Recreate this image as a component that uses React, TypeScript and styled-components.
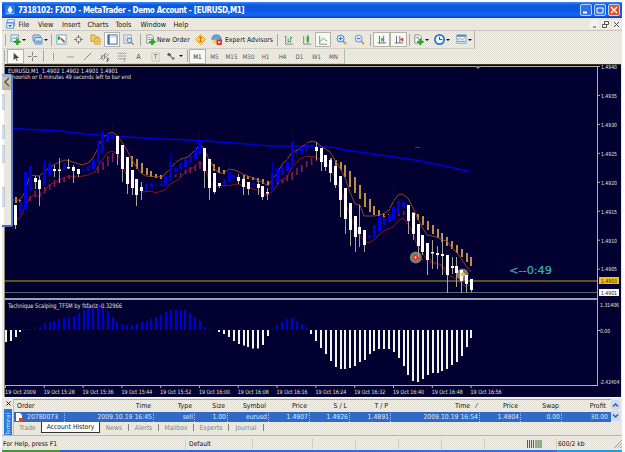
import React from "react";
import styled, { createGlobalStyle } from "styled-components";

const GlobalStyle = createGlobalStyle`
  html, body { margin: 0; padding: 0; background: #fff; overflow: hidden; }
  * { box-sizing: border-box; }
`;

const chrome = "repeating-conic-gradient(#f1f0e6 0 25%, #e2e0d6 0 50%) 0 0 / 2px 2px";

const Window = styled.div`
  width: 620px;
  height: 450px;
  margin: 2px 3px 0 2px;
  display: flex;
  flex-direction: column;
  background: ${chrome};
  font-family: "DejaVu Sans Condensed", "DejaVu Sans", sans-serif;
  font-stretch: condensed;
  font-size: 7px;
  color: #111;
  white-space: nowrap;
  overflow: hidden;
`;
const TitleBar = styled.header`
  flex: none;
  height: 16px;
  display: flex;
  align-items: center;
  padding: 0 2px 0 3px;
  background: linear-gradient(#3b8cf8 0, #0d58dc 3px, #0b5ae4 9px, #1468f4 13px, #0a43b4 16px);
  color: #fff;
`;
const Title = styled.div`
  flex: 1;
  margin-left: 3px;
  font: bold 8px "DejaVu Sans Condensed", "DejaVu Sans", sans-serif;
  font-stretch: condensed;
  letter-spacing: -0.4px;
  word-spacing: 0.2px;
`;
const CaptionButton = styled.div<{ $close?: boolean }>`
  width: 12px;
  height: 12px;
  margin-left: 2px;
  border: 1px solid #bcd2fa;
  border-radius: 2px;
  background: ${(p) => (p.$close ? "#e0512c" : "#2f6fea")};
  display: flex;
`;
const MenuBar = styled.nav`
  flex: none;
  height: 13px;
  display: flex;
  align-items: center;
  padding-left: 2px;
  border-bottom: 1px solid #c9c7ba;
`;
const MenuItem = styled.span<{ $w: number }>`
  width: ${(p) => p.$w}px;
  font-size: 7.2px;
`;
const MdiButtons = styled.div`
  margin-left: auto;
  display: flex;
  gap: 2px;
  padding-right: 1px;
`;
const MdiButton = styled.div`
  width: 9px;
  height: 9px;
  background: #f3f2ea;
  display: flex;
`;
const ToolBar = styled.div<{ $h: number; $w: number }>`
  flex: none;
  height: ${(p) => p.$h}px;
  width: ${(p) => p.$w}px;
  display: flex;
  align-items: center;
  border-right: 1px solid #bbb9ad;
  border-bottom: 1px solid #d2d0c4;
`;
const Tool = styled.div<{ $w: number; $on?: boolean }>`
  width: ${(p) => p.$w}px;
  height: 15px;
  flex: none;
  display: flex;
  align-items: center;
  justify-content: center;
  color: ${(p) => (p.$on ? "#222" : "#555")};
  font-size: 6.2px;
  background: ${(p) => (p.$on ? "#f8f8f4" : "transparent")};
  box-shadow: ${(p) => (p.$on ? "inset 0 0 0 1px #b3b3a8" : "none")};
`;
const ToolText = styled.span<{ $w: number }>`
  width: ${(p) => p.$w}px;
  flex: none;
  font-size: 6.8px;
`;
const Grip = styled.div<{ $w: number }>`
  width: ${(p) => p.$w}px;
  height: 12px;
  flex: none;
  display: flex;
  justify-content: center;
  &::before { content: ""; width: 1px; background: #aaa89c; }
`;
const Caret = styled.div<{ $w: number }>`
  width: ${(p) => p.$w}px;
  flex: none;
  display: flex;
  &::before {
    content: "";
    border: 2px solid transparent;
    border-top-color: #111;
    border-bottom: 0;
  }
`;
const ChartArea = styled.main`
  flex: none;
  position: relative;
  height: 333px;
  padding-left: 2px;
  svg { display: block; }
`;
const SlidePanel = styled.aside`
  position: absolute;
  left: 0;
  top: 10px;
  width: 11px;
  height: 153px;
  background: linear-gradient(90deg, #fff 2px, transparent 2px), ${chrome};
  border-right: 2px solid #5a82d2;
  border-bottom: 2px solid #5a62b8;
  border-radius: 0 3px 2px 0;
`;
const SlideArrow = styled.div`
  width: 9px;
  height: 16px;
  background: linear-gradient(#8aa4d8, #cfcabe 5px, #b8b2a4);
  display: flex;
  align-items: center;
  justify-content: center;
`;
const SlideTab = styled.div<{ $gap: number; $h: number }>`
  width: 3px;
  margin-top: ${(p) => p.$gap}px;
  height: ${(p) => p.$h}px;
  background: #d0dfee;
  border: 1px solid #c0cad2;
  border-left: 0;
`;
const Terminal = styled.section`
  flex: none;
  height: 39px;
  display: flex;
  padding: 1px 2px 0 2px;
  border-top: 1px solid #f9f8f2;
  border-bottom: 1px solid #bab8aa;
`;
const TerminalSide = styled.div`
  width: 8px;
  display: flex;
  flex-direction: column;
  align-items: center;
`;
const SideTitle = styled.div`
  margin-top: 1px;
  width: 8px;
  height: 26px;
  overflow: hidden;
  background: #2877dc;
  color: #d7e8ff;
  font-size: 5.8px;
  line-height: 8px;
  writing-mode: vertical-rl;
  transform: rotate(180deg);
`;
const SideClose = styled.div`
  height: 9px;
  display: flex;
  align-items: center;
`;
const TerminalBody = styled.div`
  width: 598px;
  margin-left: 1px;
  border-top: 1px solid #aaa89b;
  border-left: 1px solid #c2c0b4;
`;
const columns = "51px 89px 41px 33px 41px 41px 40px 41px 89px 41px 41px 48px";
const GridHead = styled.div`
  height: 12px;
  display: grid;
  grid-template-columns: ${columns};
  align-items: center;
  font-size: 6.9px;
`;
const GridRow = styled.div`
  height: 10px;
  display: grid;
  grid-template-columns: ${columns};
  align-items: center;
  background: #316ac5;
  color: #dbe8ff;
  font-size: 6.8px;
`;
const HeadCell = styled.div<{ $left?: boolean; $pad?: number }>`
  text-align: ${(p) => (p.$left ? "left" : "right")};
  padding: 0 ${(p) => p.$pad ?? 3}px 0 3px;
`;
const RowCell = styled.div`
  height: 9px;
  line-height: 9px;
  padding-right: 1px;
  border-right: 1px dotted #a9c0ea;
  display: flex;
  align-items: center;
  justify-content: flex-end;
  &:last-child { border-right: 0; padding-right: 2px; }
`;
const OrderCell = styled(RowCell)`
  justify-content: flex-start;
  padding-left: 1px;
  gap: 4px;
`;
const ScrollBar = styled.div`
  width: 9px;
  height: 22px;
  margin-top: 1px;
  display: flex;
  flex-direction: column;
  gap: 1px;
`;
const ScrollButton = styled.div`
  height: 10px;
  background: #c9d8fb;
  border-radius: 2px;
  display: flex;
  align-items: center;
  justify-content: center;
`;
const Tabs = styled.div`
  display: flex;
  height: 12px;
`;
const Tab = styled.div<{ $w: number; $active?: boolean }>`
  width: ${(p) => p.$w}px;
  height: ${(p) => (p.$active ? 11 : 12)}px;
  display: flex;
  align-items: center;
  justify-content: center;
  font-size: 6.7px;
  color: ${(p) => (p.$active ? "#111" : "#85847b")};
  background: ${(p) => (p.$active ? "#fff" : "transparent")};
  border: ${(p) => (p.$active ? "1px solid #333" : "0")};
  border-top: 0;
`;
const TabDivider = styled.div`
  width: 1px;
  height: 7px;
  margin-top: 2px;
  background: #85847b;
`;
const StatusBar = styled.footer`
  flex: none;
  height: 14px;
  padding-top: 2px;
  display: flex;
  align-items: center;
`;
const StatusCell = styled.div<{ $w: number; $pad?: number }>`
  width: ${(p) => p.$w}px;
  height: 10px;
  padding-left: ${(p) => p.$pad ?? 2}px;
  border-right: 1px solid #cfcdc0;
  font-size: 6.7px;
  line-height: 10px;
  display: flex;
  align-items: center;
  &:last-child { border: 0; }
`;
const SizeGrip = styled.svg`
  margin-left: auto;
`;
const TaskBar = styled.div`
  flex: 1;
  background: linear-gradient(90deg, #3d9a3a 58px, #2467dc 58px, #2b74e8 555px, #18a0ee 555px);
`;

type IconName =
  | "newchart" | "profiles" | "market" | "cross" | "folder" | "navigator" | "tester" | "order" | "editor" | "expert"
  | "bars" | "candles" | "line" | "zoomin" | "zoomout" | "scroll" | "shift" | "indicator" | "clock" | "template"
  | "cursor" | "plus" | "vline" | "hline" | "trend" | "channel" | "fibo" | "letter" | "label" | "arrows" | "logo" | "windows";

const Glyph: Record<IconName, React.ReactNode> = {
  logo: <><rect width="12" height="12" fill="#2a7ae0" /><path d="M6 1l3 5-3 4-3-4z" fill="#fff" /><path d="M1 10h10M3 7l3 3 3-3" stroke="#bfe2ff" fill="none" /></>,
  windows: <><rect x="2" y="1" width="8" height="7" fill="#fff" stroke="#4c86d8" /><rect x="1" y="4" width="8" height="7" fill="#e8f2ff" stroke="#4c86d8" /><path d="M1 5h8M3 8l2 1 2-2" stroke="#4c86d8" /></>,
  newchart: <><rect x="1" y="1" width="8" height="7" fill="#eef5f8" stroke="#7898b0" /><path d="M2 6l2-2 2 1 2-2" stroke="#3c8cc0" fill="none" /><path d="M8 5v7M4.500 8.500h7" stroke="#28a028" strokeWidth="2.500" /></>,
  profiles: <><rect x="1" y="1" width="8" height="7" rx="1" fill="#a8ccec" stroke="#6890b8" /><rect x="3" y="4" width="8" height="7" rx="1" fill="#dcecf8" stroke="#4c80b0" /><path d="M4 7h6v3H4z" fill="#78a8d0" /></>,
  market: <><rect x="1" y="1" width="10" height="10" fill="#f5fbff" stroke="#68a4d0" /><path d="M3 2l2.500 2.500L3 7 1.500 4.500z" fill="#38a050" /><path d="M6 4l4 4-1 2-4-4z" fill="#d85030" /></>,
  cross: <><circle cx="6" cy="6" r="3.500" fill="none" stroke="#666" /><path d="M6 0v4M6 8v4M0 6h4M8 6h4" stroke="#666" /></>,
  folder: <><path d="M1 1h4l1 2h3v5H1z" fill="#f4d060" stroke="#c89c30" /><path d="M5 5h6v6H5z" fill="#fbe080" stroke="#c89c30" /><path d="M8 6v4M6 8h4" stroke="#e8a020" /></>,
  navigator: <><rect x="1" y="1" width="10" height="10" fill="#fff" stroke="#3a5ea0" /><path d="M2 1v10" stroke="#3a6cc0" strokeWidth="2" /><path d="M4 3h6" stroke="#a8c4e8" /></>,
  tester: <><rect x="1" y="1" width="8" height="9" fill="#f4f8ff" stroke="#88a0b8" /><path d="M3 3v5M5 2v6M7 3v4" stroke="#9db6cc" /><circle cx="7" cy="7" r="2.500" fill="#d2e6f8" stroke="#5878a0" /><path d="M9 9l3 3" stroke="#c09028" strokeWidth="1.500" /></>,
  order: <><path d="M2 1h5l2 2v7H2z" fill="#fff" stroke="#888" /><path d="M3 4h4M3 6h4" stroke="#999" /><path d="M8 5v7M4.500 8.500h7" stroke="#28a828" strokeWidth="2.500" /></>,
  editor: <><path d="M6 .5L11.500 6 6 11.500.5 6z" fill="#ffd860" stroke="#dc9820" /><path d="M6 3v6M4 5l2-2 2 2M4 8h4" stroke="#b86810" fill="none" /></>,
  expert: <><path d="M1 6q0-5 5-5t5 5z" fill="#68a4dc" stroke="#4078ac" /><path d="M1 6h9l-3 4H3z" fill="#f0cc60" /><rect x="6" y="6" width="6" height="6" rx="1" fill="#d83820" /><path d="M8 8h2v2H8z" fill="#fff" /></>,
  bars: <><path d="M2 1v10h9M1 2h2" stroke="#777" fill="none" /><path d="M5 4v5M5 8h2M8 2v7M8 3h2" stroke="#389048" /></>,
  candles: <><path d="M2 1v10h9" stroke="#777" fill="none" /><path d="M7 0v10" stroke="#187828" /><rect x="5.500" y="2" width="3" height="6" fill="#28b038" /></>,
  line: <><path d="M2 1v10h9" stroke="#777" fill="none" /><path d="M3 8q3-6 5-3t3 2" stroke="#38a060" fill="none" /></>,
  zoomin: <><path d="M7 7l4 4" stroke="#c8a030" strokeWidth="2" /><circle cx="5" cy="5" r="3.800" fill="#d8ebff" stroke="#3f78c0" /><path d="M5 3v4M3 5h4" stroke="#2868b8" /></>,
  zoomout: <><path d="M7 7l4 4" stroke="#c8a030" strokeWidth="2" /><circle cx="5" cy="5" r="3.800" fill="#d8ebff" stroke="#6490c0" /><path d="M3 5h4" stroke="#2868b8" /></>,
  scroll: <><path d="M3 1v9M1 9.500h10M8 1v8" stroke="#557" /><path d="M5 3l4 2.500L5 8z" fill="#38a848" /></>,
  shift: <><path d="M3 1v9M1 9.500h10M7 1v8" stroke="#557" /><path d="M11 3L7 5.500 11 8z" fill="#d04030" /></>,
  indicator: <><path d="M2 1h5l2 2v7H2z" fill="#fff" stroke="#888" /><path d="M3 5l2-2 1 3" stroke="#777" fill="none" /><path d="M8 5v7M4.500 8.500h7" stroke="#28a828" strokeWidth="2.500" /></>,
  clock: <><circle cx="6" cy="6" r="5" fill="#edf7ff" stroke="#2d78cc" strokeWidth="2" /><path d="M6 3v3h3" stroke="#345" fill="none" /></>,
  template: <><rect x="1" y="1" width="10" height="9" fill="#f1f8ff" stroke="#68a0d0" /><path d="M1 2h10" stroke="#4888d0" strokeWidth="2" /><path d="M2 6l3-1 2 1 3-2" stroke="#c89030" fill="none" /><path d="M2 8h8" stroke="#58a068" /></>,
  cursor: <path d="M4 2v8l2-2 1.500 3 1-.5L7 7.500h3z" fill="#444" />,
  plus: <path d="M6 1v4M6 7v4M1 6h4M7 6h4" stroke="#777" />,
  vline: <path d="M6 2v8" stroke="#999" />,
  hline: <path d="M2 6.500h8" stroke="#999" />,
  trend: <path d="M2 10l8-8" stroke="#888" />,
  channel: <><path d="M1 9l7-7M4 10l7-7M3 4v5M6 3v5" stroke="#777" /><path d="M9 8h2M9 10h2M9 8v4" stroke="#555" /></>,
  fibo: <path d="M2 2.500h9M2 5.500h9M2 8.500h6M9 8v4M9 8.500h2" stroke="#888" strokeDasharray="2 .5" />,
  letter: <text x="3.500" y="9" fontSize="8" fill="#555">A</text>,
  label: <><rect x="2" y="2" width="8" height="9" fill="none" stroke="#aaa" strokeDasharray="1 1" /><text x="4" y="9" fontSize="7" fill="#555">T</text></>,
  arrows: <><path d="M1 4l2-2 3 2-2 2z" fill="#555" /><path d="M5 7h5l-2 3z" fill="#777" /><path d="M5 5l2 3" stroke="#555" /></>,
};
const Icon = ({ name, size = 11 }: { name: IconName; size?: number }) => (
  <svg width={size} height={size} viewBox="0 0 12 12">{Glyph[name]}</svg>
);

// Each candle: index, direction, high, body top, body bottom, low
type Candle = [number, "w" | "b", number, number, number, number];
const candles: Candle[] = [
  [2,"w",205,205,225,229],[3,"b",189,202,216,216],[4,"b",172,172,209,209],[5,"b",166,166,191,191],[6,"w",176,178,182,189],
  [7,"w",176,180,189,206],[8,"b",160,165,185,185],[9,"b",160,163,175,175],[10,"w",165,169,171,177],[11,"w",158,169.5,171,183],
  [12,"b",163,163,170,170],[13,"w",159,167,168.5,169],[14,"w",165,167,171,183],[15,"w",169,169,174,177],[16,"b",165,170,171,175],
  [17,"b",166,166,171,171],[18,"b",159,159,169,169],[19,"b",140,140,163,163],[20,"b",125,132,153,153],[21,"b",134,134,142,142],
  [22,"b",125,133,139,147],[23,"w",136,136,154,165],[24,"w",145,145,169,182],[25,"w",157,157,184,194],[26,"w",170,170,188,195],
  [27,"w",179,179,195,206],[28,"w",182,187,191,200],[29,"b",183,184,191,191],[30,"b",183,184,187,188],[31,"b",185,185,186,186],
  [32,"b",183,184,186,187],[33,"b",166,176,185,185],[34,"b",154,162,181,181],[35,"b",160,168,171,175],[36,"b",163,163,169,169],
  [37,"b",159,159,167,167],[38,"b",156,156,163,163],[39,"b",143,149,159,159],[40,"b",131,142,154,154],[41,"w",148,148,171,188],
  [42,"w",159,159,188,200],[43,"w",173,173,192,194],[44,"w",183,183,186,188],[45,"b",179,179,185,185],[46,"b",160,172,182,182],
  [47,"b",173,175,178,180],[48,"w",174,177,181,184],[49,"w",179,179,187,195],[50,"w",182,182,189,195],[51,"b",182,183,186,187],
  [52,"w",182,184,188,195],[53,"w",186,186,197,200],[54,"w",188,192,193.5,200],[55,"b",162,173,192,192],[56,"b",167,168,183,183],
  [57,"b",166,166,175,175],[58,"b",155,162,171,171],[59,"b",131,142,167,167],[60,"b",149,151,154,156],[61,"b",147,148,153,153],
  [62,"b",143,143,151,151],[63,"b",142,146,147,150],[64,"w",142,147,151,160],[65,"w",148,148,162,171],[66,"w",155,155,167,171],
  [67,"w",160,160,173,182],[68,"w",166,166,185,188],[69,"w",176,176,200,217],[70,"w",188,188,219,234],[71,"w",203,203,230,246],
  [72,"w",216,216,237,252],[73,"w",205,227,234,247],[74,"w",230,230,245,252],[75,"b",235,236,238,239],[76,"b",225,225,237,237],
  [77,"b",216,216,231,231],[78,"b",213,217,225,225],[79,"b",206,215,222,222],[80,"b",183,207,219,219],[81,"b",195,201,214,214],
  [82,"b",202,202,207,207],[83,"w",205,205,221,234],[84,"w",213,213,234,240],[85,"w",224,224,246,257],[86,"w",235,235,252,255],
  [87,"w",243,243,260,275],[88,"w",240,252,253.5,269],[89,"w",246,253,255,269],[90,"w",234,254,256,275],[91,"w",255,255,275,293],
  [92,"w",257,266,268,274],[93,"w",257,266,273,287],[94,"w",270,270,281,293],[95,"w",275,275,284,293],[96,"w",279,279,290,292],
];
type Stick = [number, number, number];
const goldSticks: Stick[] = [
  [2,197,203],[3,199,203],[26,156,167],[27,159,169],[28,163,173],[29,168,175],[30,171,177],[31,174,178],[32,175,179],[43,164,171],[44,167,173],
  [45,170,174],[49,175,180],[50,176,179],[51,177,180],[52,178,182],[53,179,184],[54,181,185],[67,158,162],[68,160,167],[69,162,170],
  [70,165,177],[71,171,187],[72,177,193],[73,185,199],[74,193,207],[75,199,212],[76,206,215],[77,210,216],[78,213,217],[79,214,217],
  [84,212,216],[85,214,220],[86,216,225],[87,221,230],[88,225,234],[89,229,238],[90,233,242],[91,237,246],[92,241,249],[93,245,253],[94,249,257],
  [95,253,262],[96,257,266],
];
const redSticks: Stick[] = [
  [5,196,201],[6,191,197],[7,192,197],[8,187,193],[9,184,190],[10,180,187],[11,178,183],[12,177,182],[13,175,179],[14,175,178],[19,167,173],
  [20,162,170],[21,156,166],[22,153,162],[35,174,177],[36,173,177],[37,170,174],[38,167,173],[39,165,171],[40,162,169],[56,181,184],
  [57,179,183],[58,175,181],[59,172,180],[60,168,175],[61,165,172],[62,161,167],[63,158,165],[64,155,161],[81,212,216],[82,211,215],
];
const histogram = [
  342,341,337,332,329,329,329,327,324,322,321,319,318,317,316,313,310,307,306,304,307,312,317,322,324,325,325,324,322,321,319,317,315,312,
  310,310,310,310,313,317,321,327,329,330,332,334,337,341,344,345.5,347,348.5,348.5,345,336,329,325,322,319,318,321,324,327,334,341,348,354,
  361,367,369,369,368,366,362,360,354,351,349,349,349,352,358,366,375,381,382,379,375,373,373,371,369,365,362,356,347,338,
];
const upperBand = "13,200 20,200 25,192 30,175 39,176 49,168 55,164 65,160 70,161 82,165 88,163 93,158 98,148 103,137 112,132 117,135 122,142 127,150 132,160 137,168 141,173 146,176 162,177 170,169 175,163 181,159 188,157 193,152 200,145 203,147 209,159 214,168 219,173 224,173 229,169 235,170 243,174 253,178 262,182 268,186 272,180 278,172 283,163 287,160 292,152 298,150 307,143 312,141 316,142 321,146 330,152 335,160 340,168 345,178 350,192 355,204 360,205 364,216 374,216 383,214 389,210 393,202 398,195 402,194 408,198 413,208 417,217 422,227 427,235 437,237 442,240 447,241 451,247 457,253 461,258 466,266 471,272";
const lowerBand = "13,218 18,219 21,217 25,207 30,197 35,195 39,197 44,192 49,185 58,181 68,176 78,177 88,175 95,172 100,163 107,153 111,151 117,153 122,163 127,177 132,185 137,189 143,192 152,191 155,193 165,190 170,184 178,180 185,173 190,169 195,167 200,161 205,168 209,180 213,186 219,186 232,185 238,184 248,187 257,190 263,194 268,195 273,191 280,181 287,177 292,167 300,159 307,156 315,157 321,160 330,167 335,178 340,188 345,202 350,215 355,227 360,235 364,241 369,243 374,240 379,235 384,231 393,227 398,221 403,218 408,224 413,233 417,245 425,257 433,262 442,265 447,275 453,277 460,282 466,287 471,284";
const times = ["2009","15:28","15:36","15:44","15:52","16:00","16:08","16:16","16:24","16:32","16:40","16:48","16:56"];
const prices = ["1.4940","1.4935","1.4930","1.4925","1.4920","1.4915","1.4910","1.4905"];
const barX = (i: number) => 5.9 + 4.85 * i;

const Label = styled.text`
  font-family: "DejaVu Sans Condensed", "DejaVu Sans", sans-serif;
  font-stretch: condensed;
  font-size: ${(p) => p.fontSize ?? 5.6}px;
  fill: ${(p) => p.fill ?? "#e4e4d8"};
`;

const Chart = () => (
  <svg width="617" height="333" viewBox="4 64 617 333">
    <rect x="4" y="64" width="617" height="333" fill="#020030" />
    <path d="M4 64.500H621" stroke="#3c3428" />
    <path d="M5 66.500H597" stroke="#b0aea4" />
    <path d="M4.500 64V397" stroke="#8b887c" />
    <path d="M597.500 66V386M5 385.500H598" stroke="#b9ae91" fill="none" />
    <path d="M475 66h6l-3 3z" fill="#7899a0" />
    <path d="M5 281H597" stroke="#7c7014" strokeWidth="1.400" />
    <path d="M5 292.500H597" stroke="#66665c" />
    <path d="M5 299H597" stroke="#8c9dc0" strokeWidth="2" />
    <path d="M5 299H597" stroke="#b6ac8e" strokeWidth="1" strokeDasharray="2 2" />
    <polyline points="13,128.500 60,131 85,134 150,138.500 200,140.500 235,143 270,146 305,146 335,147.500 345,150 380,155 415,160 440,165 470,171.500" stroke="#0000dc" strokeWidth="1.300" fill="none" />
    {redSticks.map(([i, a, b]) => <rect key={i} x={barX(i) - 0.7} y={a} width="1.600" height={b - a} fill="#861c54" />)}
    {goldSticks.map(([i, a, b]) => <rect key={i} x={Math.round(barX(i) - 1)} y={a} width="2" height={b - a} fill="#c08c40" />)}
    <polyline points={upperBand} stroke="#9a4c32" fill="none" strokeWidth=".9" />
    <polyline points={lowerBand} stroke="#951426" fill="none" strokeWidth=".9" />
    <path d="M415 147.500h5" stroke="#a01828" />
    <circle cx="415.800" cy="257.500" r="6" fill="#85776c" />
    <circle cx="462.500" cy="274.500" r="6" fill="#85776c" />
    <path d="M418 258L462 274" stroke="#a02030" strokeDasharray="2 2" strokeWidth=".8" />
    {candles.map(([i, kind, high, top, bottom, low]) => {
      const x = Math.round(barX(i) - 0.5);
      return (
        <g key={i}>
          <path d={`M${x + 0.5} ${high}V${low}`} stroke={kind === "w" ? "#a4a890" : "#0000c0"} strokeDasharray={kind === "w" ? undefined : "1 1"} />
          <rect x={x - 1} y={top} width="3" height={Math.max(1, bottom - top)} fill={kind === "w" ? "#fff" : "#0000dc"} />
        </g>
      );
    })}
    <path d="M412.500 257.500l3-3 3 3-3 3z" fill="#ee2020" />
    <path d="M414 257.500h3M415.500 256v3" stroke="#fff" strokeWidth=".7" />
    <path d="M460 274.500l2.500-2.500 2.500 2.500-2.500 2.500z" fill="#f0c020" stroke="#fff" strokeWidth=".5" />
    {histogram.map((y, i) => {
      const up = y < 330;
      return <rect key={i} x={Math.round(barX(i) - 1)} y={up ? y : 330} width="2" height={Math.abs(y - 330)} fill={up ? "#0000d8" : "#f3f2eb"} />;
    })}
    <Label x="8" y="72.500" fontSize="6" textLength="110" lengthAdjust="spacingAndGlyphs">EURUSD,M1&nbsp; 1.4902 1.4902 1.4901 1.4901</Label>
    <Label x="12" y="79" fontSize="6" textLength="119" lengthAdjust="spacingAndGlyphs">hoorish or 0 minutes 49 seconds left to bar end</Label>
    <Label x="8" y="308" fontSize="6.200" textLength="114" lengthAdjust="spacingAndGlyphs">Technique Scalping_TF5M by fsfariz -0.32966</Label>
    <text x="509" y="273.500" fontSize="10" fill="#3cb3a2" stroke="#3cb3a2" strokeWidth=".2" fontFamily="DejaVu Sans, sans-serif" textLength="43" lengthAdjust="spacingAndGlyphs">&lt;--0:49</text>
    {prices.map((p, k) => (
      <g key={p}>
        <path d={`M597 ${66.5 + 28.95 * k}h3`} stroke="#b9ae91" />
        <Label x="601" y={68.8 + 28.95 * k} textLength="16" lengthAdjust="spacingAndGlyphs">{p}</Label>
      </g>
    ))}
    <rect x="599" y="277" width="20" height="7" fill="#f0c010" />
    <Label x="601" y="282.700" fill="#302800" textLength="16" lengthAdjust="spacingAndGlyphs">1.4903</Label>
    <rect x="599" y="289" width="20" height="7" fill="#fff" />
    <Label x="601" y="294.700" fill="#111" textLength="16" lengthAdjust="spacingAndGlyphs">1.4901</Label>
    <path d="M597 330.500h3" stroke="#b9ae91" />
    <Label x="600" y="306.500" textLength="19" lengthAdjust="spacingAndGlyphs">1.31406</Label>
    <Label x="600" y="332.500" textLength="10" lengthAdjust="spacingAndGlyphs">0.00</Label>
    <Label x="599.500" y="383.500" fontSize="5.400" textLength="20" lengthAdjust="spacingAndGlyphs">-2.42404</Label>
    {times.map((t, k) => (
      <g key={t}>
        <path d={`M${5.5 + 38.8 * k} 386v2`} stroke="#b9ae91" />
        <Label x={5 + 38.8 * k} y="393.500" textLength="31" fontSize="5.900" lengthAdjust="spacingAndGlyphs">{`19 Oct ${t}`}</Label>
      </g>
    ))}
  </svg>
);

const menus: [string, number][] = [["File", 19.5], ["View", 24], ["Insert", 25.5], ["Charts", 28], ["Tools", 25], ["Window", 33], ["Help", 20]];
const frames = ["M5", "M15", "M30", "H1", "H4", "D1", "W1", "MN"];
const heads = ["Type", "Size", "Symbol", "Price", "S / L", "T / P"];
const values = ["2009.10.19 16:45", "sell", "1.00", "eurusd", "1.4907", "1.4926", "1.4891", "2009.10.19 16:54", "1.4904", "0.00", "30.00"];
const tabs: [string, number][] = [["News", 28], ["Alerts", 29], ["Mailbox", 34], ["Experts", 34], ["Journal", 34]];

export default function App() {
  return (
    <>
      <GlobalStyle />
      <Window>
        <TitleBar>
          <Icon name="logo" size={10} />
          <Title>7318102: FXDD - MetaTrader - Demo Account - [EURUSD,M1]</Title>
          <CaptionButton><svg width="10" height="10"><path d="M2 7.500h4" stroke="#fff" strokeWidth="2" /></svg></CaptionButton>
          <CaptionButton><svg width="10" height="10"><path d="M2 3h6v5H2z" stroke="#fff" fill="none" /></svg></CaptionButton>
          <CaptionButton $close><svg width="10" height="10"><path d="M2 2l6 6M8 2L2 8" stroke="#fff" strokeWidth="1.400" /></svg></CaptionButton>
        </TitleBar>
        <MenuBar>
          <Tool $w={14.5}><Icon name="windows" size={10} /></Tool>
          {menus.map(([m, w]) => <MenuItem key={m} $w={w}>{m}</MenuItem>)}
          <MdiButtons>
            <MdiButton><svg width="9" height="9"><path d="M3 7h3" stroke="#444" /></svg></MdiButton>
            <MdiButton><svg width="9" height="9"><path d="M3.500 1.500h4v3h-4zM1.500 4.500h4v3h-4z" stroke="#555" fill="none" /></svg></MdiButton>
            <MdiButton><svg width="9" height="9"><path d="M2 2l5 5M7 2L2 7" stroke="#444" /></svg></MdiButton>
          </MdiButtons>
        </MenuBar>
        <ToolBar $h={18} $w={473}>
          <Grip $w={7} /><Tool $w={13}><Icon name="newchart" /></Tool><Caret $w={9} />
          <Tool $w={13}><Icon name="profiles" /></Tool><Caret $w={6} /><Grip $w={3} />
          <Tool $w={17}><Icon name="market" /></Tool>
          <Tool $w={17}><Icon name="cross" size={9} /></Tool>
          <Tool $w={17}><Icon name="folder" /></Tool>
          <Tool $w={16} $on><Icon name="navigator" /></Tool>
          <Tool $w={17}><Icon name="tester" /></Tool><Grip $w={6} />
          <Tool $w={14}><Icon name="order" /></Tool><ToolText $w={36}>New Order</ToolText>
          <Tool $w={15}><Icon name="editor" /></Tool>
          <Tool $w={17}><Icon name="expert" /></Tool><ToolText $w={50}>Expert Advisors</ToolText><Grip $w={5} />
          <Tool $w={18}><Icon name="bars" size={10} /></Tool>
          <Tool $w={17}><Icon name="candles" size={10} /></Tool>
          <Tool $w={16} $on><Icon name="line" size={10} /></Tool>
          <Tool $w={20}><Icon name="zoomin" /></Tool>
          <Tool $w={17}><Icon name="zoomout" /></Tool><Grip $w={5} />
          <Tool $w={17} $on><Icon name="scroll" size={10} /></Tool>
          <Tool $w={17} $on><Icon name="shift" size={10} /></Tool><Grip $w={4} />
          <Tool $w={14}><Icon name="indicator" /></Tool><Caret $w={8} />
          <Tool $w={13}><Icon name="clock" /></Tool><Caret $w={9} />
          <Tool $w={13}><Icon name="template" /></Tool><Caret $w={5} />
        </ToolBar>
        <ToolBar $h={15} $w={343}>
          <Grip $w={5} /><Tool $w={17} $on><Icon name="cursor" /></Tool>
          <Tool $w={17}><Icon name="plus" /></Tool><Grip $w={4} />
          <Tool $w={17}><Icon name="vline" /></Tool>
          <Tool $w={17}><Icon name="hline" /></Tool>
          <Tool $w={17}><Icon name="trend" /></Tool>
          <Tool $w={17}><Icon name="channel" /></Tool>
          <Tool $w={17}><Icon name="fibo" /></Tool>
          <Tool $w={17}><Icon name="letter" /></Tool>
          <Tool $w={17}><Icon name="label" /></Tool>
          <Tool $w={15}><Icon name="arrows" /></Tool><Caret $w={7} /><Grip $w={3} />
          <Tool $w={17} $on>M1</Tool>
          {frames.map((f) => <Tool key={f} $w={17}>{f}</Tool>)}
        </ToolBar>
        <ChartArea>
          <Chart />
          <SlidePanel>
            <SlideArrow><svg width="8" height="12"><path d="M6 2L2 6l4 4" stroke="#5f594e" strokeWidth="1.600" fill="none" /></svg></SlideArrow>
            <SlideTab $gap={4} $h={16} /><SlideTab $gap={15} $h={14} /><SlideTab $gap={6} $h={18} /><SlideTab $gap={24} $h={20} />
          </SlidePanel>
        </ChartArea>
        <Terminal>
          <TerminalSide>
            <SideClose><svg width="5" height="5"><path d="M.5.5l4 4M4.500.5l-4 4" stroke="#222" /></svg></SideClose>
            <SideTitle>Terminal</SideTitle>
          </TerminalSide>
          <TerminalBody>
            <GridHead>
              <HeadCell $left>Order</HeadCell>
              <HeadCell>Time</HeadCell>
              {heads.map((h) => <HeadCell key={h}>{h}</HeadCell>)}
              <HeadCell $pad={3}>Time &nbsp;&nbsp;⁄</HeadCell>
              <HeadCell>Price</HeadCell>
              <HeadCell>Swap</HeadCell>
              <HeadCell $pad={4}>Profit</HeadCell>
            </GridHead>
            <GridRow>
              <OrderCell>
                <svg width="8" height="9"><path d="M1 0h4l2 2v6H1z" fill="#fff" /><path d="M4 5h4v4H4z" fill="#d84028" /></svg>
                20780073
              </OrderCell>
              {values.map((v, i) => <RowCell key={i}>{v}</RowCell>)}
            </GridRow>
            <Tabs>
              <Tab $w={27}>Trade</Tab>
              <Tab $w={59} $active>Account History</Tab>
              {tabs.map(([t, w]) => <React.Fragment key={t}><Tab $w={w}>{t}</Tab><TabDivider /></React.Fragment>)}
            </Tabs>
          </TerminalBody>
          <ScrollBar>
            <ScrollButton><svg width="7" height="6"><path d="M1 4.500l2.500-2.500L6 4.500" stroke="#405c98" strokeWidth="1.500" fill="none" /></svg></ScrollButton>
            <ScrollButton><svg width="7" height="6"><path d="M1 1.500L3.500 4 6 1.500" stroke="#405c98" strokeWidth="1.500" fill="none" /></svg></ScrollButton>
          </ScrollBar>
        </Terminal>
        <StatusBar>
          <StatusCell $w={184} $pad={1}>For Help, press F1</StatusCell>
          <StatusCell $w={67} $pad={3}>Default</StatusCell>
          <StatusCell $w={60} /><StatusCell $w={43} /><StatusCell $w={43} /><StatusCell $w={43} /><StatusCell $w={43} />
          <StatusCell $w={72} $pad={42}>
            <svg width="15" height="8">
              {[0, 2, 4, 6].map((x) => <path key={x} d={`M${x + 0.5} 0v8`} stroke="#347828" />)}
              <path d="M8 1h7M8 3h7M8 5h7M8 7h7" stroke="#3a7038" /><path d="M10.500 0v8" stroke="#c9b030" />
            </svg>
          </StatusCell>
          <StatusCell $w={65} $pad={1}>
            600/2 kb
            <SizeGrip width="8" height="8"><path d="M0 8L8 0M3 8l5-5M6 8l2-2" stroke="#aaa89a" /></SizeGrip>
          </StatusCell>
        </StatusBar>
        <TaskBar />
      </Window>
    </>
  );
}
